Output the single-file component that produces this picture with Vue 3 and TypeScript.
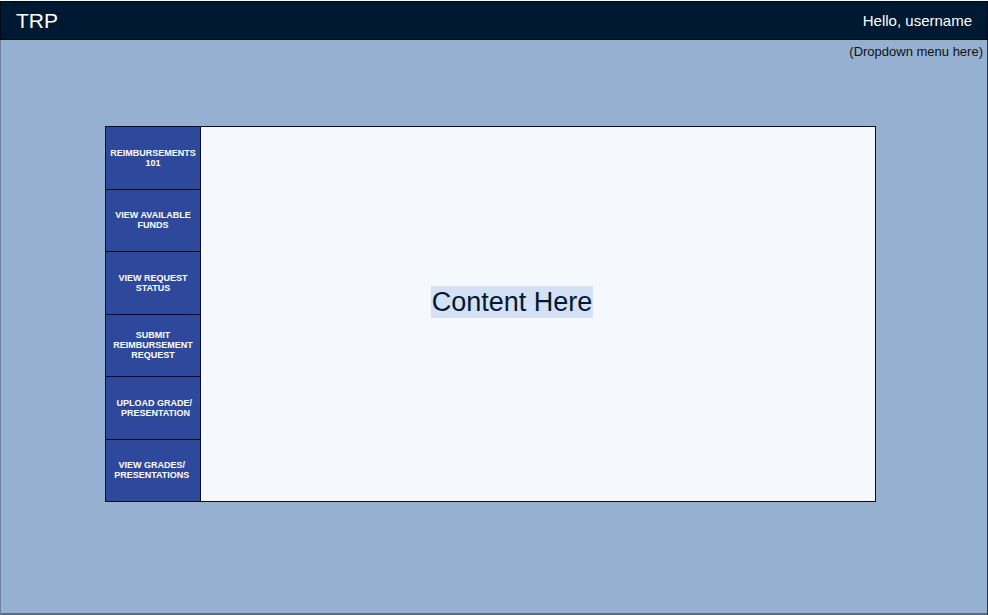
<script setup lang="ts">
interface MenuItem {
  id: string
  lines: string[]
}

const username = 'username'

const menu: MenuItem[] = [
  { id: 'intro', lines: ['REIMBURSEMENTS', '101'] },
  { id: 'funds', lines: ['VIEW AVAILABLE', 'FUNDS'] },
  { id: 'status', lines: ['VIEW REQUEST', 'STATUS'] },
  { id: 'submit', lines: ['SUBMIT', 'REIMBURSEMENT', 'REQUEST'] },
  { id: 'upload', lines: ['\u00a0UPLOAD GRADE/', '\u00a0\u00a0PRESENTATION'] },
  { id: 'grades', lines: ['VIEW GRADES/\u00a0', 'PRESENTATIONS\u00a0'] },
]
</script>

<template>
  <div class="page">
    <header class="topbar">
      <span class="brand">TRP</span>
      <span class="greeting">Hello, {{ username }}</span>
    </header>
    <div class="dropdown-note">(Dropdown menu here)</div>
    <div class="panel">
      <nav class="menu">
        <button v-for="item in menu" :key="item.id" type="button" class="menu-item">
          <span v-for="line in item.lines" :key="line" class="line">{{ line }}</span>
        </button>
      </nav>
      <main class="content">
        <span class="placeholder">Content Here</span>
      </main>
    </div>
  </div>
</template>

<style>
body {
  margin: 0;
  background: #f8f8f8;
}
</style>

<style scoped>
.page {
  box-sizing: border-box;
  min-height: 100vh;
  border-top: 1px solid #f8f8f8;
  background: #95b0d1;
  box-shadow: inset 1px 0 #6f8199, inset -1px 0 #2b3644, inset 0 -2px #5f6c80;
  font-family: "Liberation Sans", Arial, sans-serif;
}

.topbar {
  box-sizing: border-box;
  display: flex;
  align-items: center;
  justify-content: space-between;
  height: 39px;
  padding: 0 15px;
  border: 1px solid #000a14;
  background: #001932;
  color: #fff;
}

.brand {
  font-size: 21px;
  line-height: 24px;
}

.greeting {
  font-size: 15px;
  line-height: 18px;
}

.dropdown-note {
  padding: 4px 5px 0;
  color: #111;
  font-size: 13px;
  line-height: 16px;
  text-align: right;
}

.panel {
  display: grid;
  grid-template-columns: 95px 1fr;
  margin: 66px 112px 0 105px;
  border: 1px solid #0a0d14;
  background: #f5f8ff;
}

.menu {
  display: grid;
  grid-auto-rows: 1fr;
  gap: 1px;
  min-height: 374px;
  border-right: 1px solid #0a0d14;
  background: #0a0d14;
}

.menu-item {
  display: flex;
  flex-direction: column;
  align-items: center;
  justify-content: center;
  padding: 0;
  border: 0;
  background: #2e489c;
  color: #fff;
  font-family: inherit;
  font-size: 9px;
  font-weight: bold;
  line-height: 10px;
  cursor: pointer;
}

.line {
  white-space: nowrap;
}

.content {
  display: flex;
  align-items: center;
  justify-content: center;
  padding: 0 52px 24px 0;
}

.placeholder {
  padding: 0 1px;
  background: #d4e1f5;
  color: #001933;
  font-size: 27px;
  line-height: 32px;
}
</style>
